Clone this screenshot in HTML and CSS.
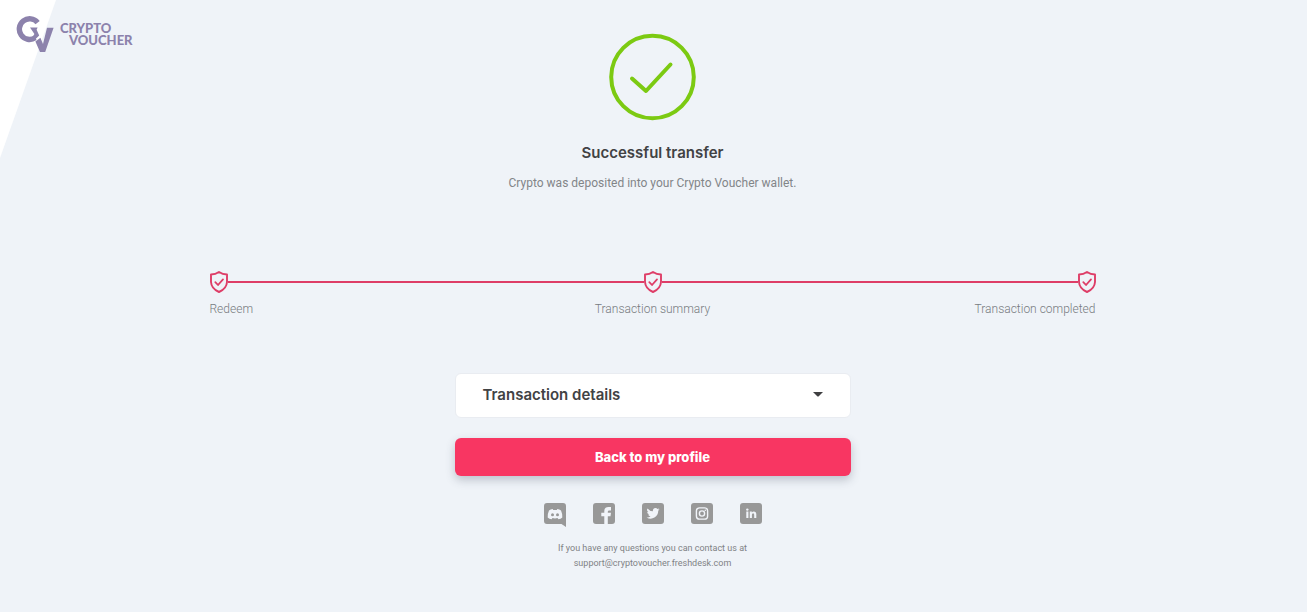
FILE: index.html
```html
<!DOCTYPE html>
<html lang="en">
<head>
<meta charset="utf-8">
<meta name="viewport" content="width=device-width, initial-scale=1">
<title>Successful transfer</title>
<link rel="stylesheet" href="styles.css">
</head>
<body>
<svg class="corner" viewBox="0 0 56 158" aria-hidden="true"><path d="M0 0H56L0 158Z" fill="#fff"/></svg>
<header class="brand">
  <a class="logo" href="#" aria-label="Crypto Voucher">
    <svg class="logo-mark" viewBox="0 0 38 38" aria-hidden="true">
      <path d="M21.6 6.6A10.3 10.3 0 1 0 19.2 21.8" fill="none" stroke="#8c82ac" stroke-width="5.4"/>
      <path d="M14 11.6H21.6L20.6 13.8L23.2 19.6L18.6 24L17 20.5L18.4 18Z" fill="#8c82ac"/>
      <path d="M19.4 25.6L24.4 21.8L27 28L31 11.8H37.6L29.2 36H24Z" fill="#8c82ac"/>
    </svg>
    <span class="logo-text"><span>CRYPTO</span><span class="logo-second">VOUCHER</span></span>
  </a>
</header>
<main class="page">
  <svg class="success" viewBox="0 0 88 88" aria-hidden="true"><circle cx="43.5" cy="44" r="41.3"/><path d="M23 45.5L37 58L61.5 31.5"/></svg>
  <h1 class="title">Successful transfer</h1>
  <p class="lead">Crypto was deposited into your Crypto Voucher wallet.</p>

  <section class="stepper" aria-label="Progress">
    <div class="track">
      <svg class="shield" viewBox="0 0 20 22"><use href="#shield"/></svg>
      <span class="line"></span>
      <svg class="shield" viewBox="0 0 20 22"><use href="#shield"/></svg>
      <span class="line"></span>
      <svg class="shield" viewBox="0 0 20 22"><use href="#shield"/></svg>
    </div>
    <ol class="labels"><li>Redeem</li><li>Transaction summary</li><li>Transaction completed</li></ol>
  </section>

  <div class="actions">
    <button class="details" type="button" aria-expanded="false">Transaction details
      <svg class="caret" viewBox="0 0 10 5" aria-hidden="true"><path d="M0 0H10L6 4Q5 5 4 4Z" fill="#3f3f41"/></svg>
    </button>
    <button class="primary" type="button">Back to my profile</button>
  </div>

  <nav class="social" aria-label="Social links">
    <a href="#" aria-label="Discord"><svg viewBox="0 0 22 24">
      <path d="M3 0H19Q22 0 22 3V24L17.5 21H3Q0 21 0 18V3Q0 0 3 0Z" fill="#989898"/>
      <path d="M8.7 6Q6.6 6.2 5 7.4Q3.5 10.5 3.7 14.5Q5.2 16.2 7.6 16.3L8.5 15Q11 15.8 13.5 15L14.4 16.3Q16.8 16.2 18.3 14.5Q18.5 10.5 17 7.4Q15.4 6.2 13.3 6L12.8 6.9H9.2Z" fill="#f1f4f9"/>
      <circle cx="8.5" cy="11.7" r="1.5" fill="#989898"/><circle cx="13.5" cy="11.7" r="1.5" fill="#989898"/></svg></a>
    <a href="#" aria-label="Facebook"><svg viewBox="0 0 22 24">
      <rect width="22" height="21" rx="3" fill="#989898"/>
      <path d="M11.3 21V13.2H8.3V9.8H11.3V8Q11.3 4 15.5 4H18V7.4H16.2Q14.8 7.4 14.8 8.7V9.8H18L17.5 13.2H14.8V21Z" fill="#f1f4f9"/></svg></a>
    <a href="#" aria-label="Twitter"><svg viewBox="0 0 22 24">
      <rect width="22" height="21" rx="3" fill="#989898"/>
      <path transform="translate(4.6 3.8) scale(.54)" d="M24 4.6a10 10 0 0 1-2.8.8 5 5 0 0 0 2.1-2.7 10 10 0 0 1-3.1 1.2 4.9 4.9 0 0 0-8.4 4.5A14 14 0 0 1 1.7 3.1a4.9 4.9 0 0 0 1.5 6.6 5 5 0 0 1-2.2-.6 4.9 4.9 0 0 0 3.9 4.9 5 5 0 0 1-2.2.1 4.9 4.9 0 0 0 4.6 3.4A9.9 9.9 0 0 1 0 19.6a14 14 0 0 0 21.5-12.4A10 10 0 0 0 24 4.6Z" fill="#f1f4f9"/></svg></a>
    <a href="#" aria-label="Instagram"><svg viewBox="0 0 22 24">
      <rect width="22" height="21" rx="3" fill="#989898"/>
      <rect x="5.4" y="4.9" width="11.2" height="11.2" rx="3.2" fill="none" stroke="#f1f4f9" stroke-width="1.4"/>
      <circle cx="11" cy="10.5" r="2.6" fill="none" stroke="#f1f4f9" stroke-width="1.4"/><circle cx="14.3" cy="7.2" r=".8" fill="#f1f4f9"/></svg></a>
    <a href="#" aria-label="LinkedIn"><svg viewBox="0 0 22 24">
      <rect width="22" height="21" rx="3" fill="#989898"/>
      <circle cx="7.3" cy="6.6" r="1.2" fill="#f1f4f9"/>
      <path d="M6.3 8.6H8.4V15H6.3ZM9.8 8.6H11.8V9.5Q12.5 8.4 13.8 8.4Q16.3 8.4 16.3 11.3V15H14.2V11.8Q14.2 10.2 13.1 10.2Q11.9 10.2 11.9 11.8V15H9.8Z" fill="#f1f4f9"/></svg></a>
  </nav>
  <footer class="contact">If you have any questions you can contact us at<br><a href="mailto:support@cryptovoucher.freshdesk.com">support@cryptovoucher.freshdesk.com</a></footer>
</main>
<svg class="defs" aria-hidden="true"><defs><g id="shield" fill="none" stroke="#de3d67" stroke-linecap="round" stroke-linejoin="round">
  <path stroke-width="1.9" d="M10 1Q13.5 3.3 18 3.5V11Q17.6 17.8 10 21Q2.4 17.8 2 11V3.5Q6.5 3.3 10 1Z"/>
  <path stroke-width="1.8" d="M6.3 11.2L9 14L14 8.4"/></g></defs></svg>
</body>
</html>
```
FILE: styles.css
```css
* { box-sizing: border-box; }
body {
  margin: 0;
  background: #eff3f8;
  color: #414244;
  font-family: Roboto, "Liberation Sans", sans-serif;
}
a { color: inherit; text-decoration: none; }
button { font: inherit; border: 0; cursor: pointer; }
.defs { position: absolute; width: 0; height: 0; }
.corner { position: absolute; top: 0; left: 0; width: 56px; height: 158px; z-index: -1; }
.brand { position: absolute; top: 16px; left: 16px; }
.logo { display: flex; gap: 6px; color: #8c82ac; }
.logo-mark { width: 38px; height: 38px; }
.logo-text {
  display: flex;
  flex-direction: column;
  padding-top: 6px;
  font: 900 13px/12px Lato, sans-serif;
}
.logo-second { padding-left: 9px; }
.page {
  display: flex;
  flex-direction: column;
  align-items: center;
  padding: 33px 18px 40px 16px;
}
.success { width: 88px; height: 88px; fill: none; stroke: #7cca12; stroke-width: 4; stroke-linecap: round; stroke-linejoin: round; }
.title { margin: 22px 0 0; font: 600 15px/20px Inter, sans-serif; }
.lead { margin: 10px 0 0; font-size: 12px; line-height: 20px; color: #828588; }
.stepper { width: 100%; max-width: 888px; margin-top: 78px; }
.track { display: flex; align-items: center; }
.shield { width: 20px; height: 22px; flex: none; }
.line { flex: 1; height: 2px; margin: 0 -1px; background: #de3d67; }
.labels {
  display: flex;
  justify-content: space-between;
  margin: 7px 0 0;
  padding: 0 1px;
  list-style: none;
  font-size: 12px;
  font-weight: 300;
  line-height: 18px;
  color: #777b7f;
}
.labels li { flex: 1; text-align: center; }
.labels li:first-child { text-align: left; }
.labels li:last-child { text-align: right; }
.actions { display: flex; flex-direction: column; gap: 20px; width: 100%; max-width: 396px; margin-top: 55px; }
.details {
  display: flex;
  align-items: center;
  justify-content: space-between;
  height: 45px;
  padding: 0 27px 2px;
  background: #fff;
  border: 1px solid #e9ecf1;
  border-radius: 6px;
  color: #414244;
  font: 600 15px/20px Inter, sans-serif;
}
.caret { width: 10px; height: 5px; }
.primary {
  height: 38px;
  background: #f83662;
  border-radius: 6px;
  box-shadow: 0 4px 10px rgba(60, 70, 90, .28);
  color: #fff;
  font: 800 13px/20px Inter, sans-serif;
}
.social { display: flex; gap: 27px; margin-top: 27px; }
.social a, .social svg { display: block; width: 22px; height: 24px; }
.contact { margin-top: 14px; font-size: 9px; line-height: 15px; text-align: center; color: #7f8285; }
```
